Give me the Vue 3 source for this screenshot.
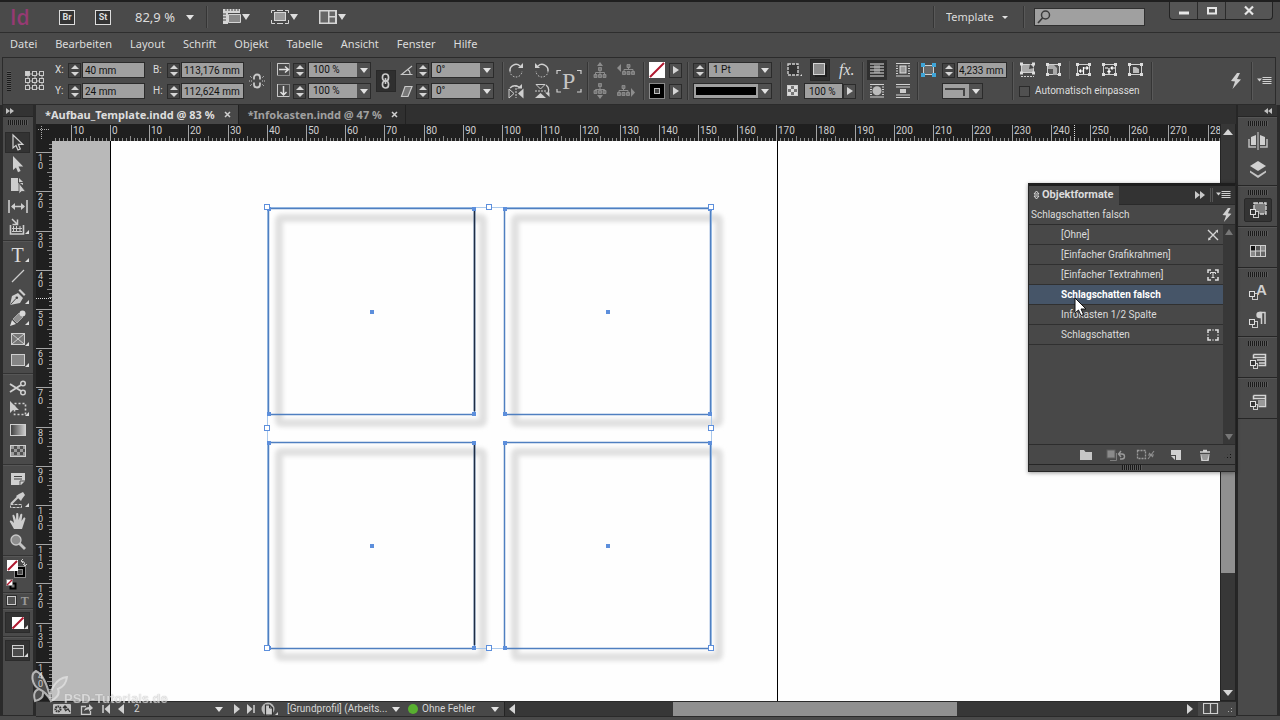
<script setup>
const icons = {
  selection: [20, 20, '<path d="M5 2v13l3-2.600 2 4.600 2.300-1-2-4.600h4.500z" fill="#3a3a3a" stroke="#d2d2d2" stroke-width="1.200"/>'],
  direct: [20, 20, '<path d="M5 2v14l3-2.600 2 4.800 2.600-1.100-2.100-4.700h4.700z" fill="#cfcfcf"/>'],
  page: [20, 20, '<path d="M3 3h7v5h5v2l-4-2.500v8.500H3z" fill="#cdcdcd"/><path d="M11 3l4 4h-4z" fill="#cdcdcd"/><path d="M11 8v11l2.500-2.500h4z" fill="#cdcdcd" stroke="#4a4a4a" stroke-width=".8"/>'],
  gap: [20, 20, '<path d="M1 4v13M19 4v13M4 10.500h12" stroke="#cdcdcd" stroke-width="1.600"/><path d="M3 10.500l4-3.500v7zM17 10.500l-4-3.500v7z" fill="#cdcdcd"/>'],
  collector: [20, 20, '<path d="M2.500 8v9h13V8" stroke="#cdcdcd" stroke-width="1.600" fill="none"/><path d="M5.500 9v6M8.500 9v6M12 9v6M4 11.500h10M4 14.500h10" stroke="#cdcdcd" stroke-width="1" fill="none"/><path d="M4 2l5 5M9.500 2.500v5h-5" stroke="#cdcdcd" stroke-width="1.500" fill="none"/>'],
  line: [20, 20, '<path d="M4 16L16 4" stroke="#cdcdcd" stroke-width="1.300"/>'],
  pen: [20, 20, '<path d="M2 18l2-9 6-3 5 5-3 5z" fill="#cdcdcd"/><path d="M10.500 3.500l5.500 5.500 1.500-1.500-5.500-5.500z" fill="#cdcdcd"/><path d="M2.500 17.500l5.500-6" stroke="#444"/><circle cx="8.800" cy="10.800" r="1.300" fill="#444"/>'],
  pencil: [20, 20, '<path d="M2 18l2-6 4 4z" fill="#ddd"/><path d="M5 11l6-6 4 4-6 6z" fill="#8f8f8f" stroke="#b5b5b5" stroke-width=".8"/><circle cx="14.500" cy="5.500" r="3" fill="#d8d8d8"/>'],
  xframe: [20, 20, '<rect x="3.500" y="4.500" width="13" height="11" fill="#777" stroke="#cfcfcf"/><path d="M4 5l12 10M16 5L4 15" stroke="#cfcfcf"/>'],
  rect: [20, 20, '<rect x="3.500" y="4.500" width="13" height="11" fill="#858585" stroke="#cfcfcf"/>'],
  scissors: [20, 20, '<path d="M2 6l11 7M2 14l11-7" stroke="#cfcfcf" stroke-width="1.900"/><circle cx="15" cy="5.500" r="2.300" fill="none" stroke="#cfcfcf" stroke-width="1.500"/><circle cx="15" cy="14.500" r="2.300" fill="none" stroke="#cfcfcf" stroke-width="1.500"/>'],
  transform: [20, 20, '<rect x="6.500" y="4.500" width="11" height="11" fill="none" stroke="#cfcfcf" stroke-width="1.600" stroke-dasharray="2 2"/><path d="M2 2v12l3-3h6z" fill="#cfcfcf"/>'],
  gradient: [20, 20, '<defs><linearGradient id="gsw"><stop offset="0" stop-color="#3c3c3c"/><stop offset="1" stop-color="#d0d0d0"/></linearGradient></defs><rect x="2.500" y="4.500" width="15" height="11" fill="url(#gsw)" stroke="#cfcfcf"/>'],
  feather: [20, 20, '<rect x="2.500" y="4.500" width="15" height="11" fill="#9a9a9a" stroke="#cfcfcf"/><path d="M3 8h3v3H3zM9 8h3v3H9zM6 5h3v3H6zM12 5h3v3h-3zM15 8h2v3h-2zM6 11h3v3H6zM12 11h3v3h-3z" fill="#505050"/>'],
  note: [20, 20, '<path d="M3 4h14v8l-4 4H3z" fill="#d0d0d0"/><path d="M6 7.500h8M6 10h8" stroke="#444"/><path d="M12 16v-4h5" fill="none" stroke="#555"/>'],
  dropper: [20, 20, '<path d="M3 14l7-7" stroke="#ccc" stroke-width="2.200"/><path d="M8 6l5 5 1-2 3-4-2-3-4 2z" fill="#cfcfcf"/><rect x="2.500" y="14.500" width="11" height="3" fill="none" stroke="#ccc" stroke-dasharray="3 1"/>'],
  hand: [20, 20, '<path d="M6 18l-4-7c-.8-1.500 1-2.200 2-1l2 2-1.500-7c-.2-1.500 1.700-1.800 2-.3L8 9l.2-6c0-1.400 2-1.400 2.100 0l.3 6 1.700-5.400c.4-1.300 2.200-.9 2 .5L13.500 10l2-3c.8-1 2.300-.2 1.800 1L15 15l-1 3z" fill="#cdcdcd"/>'],
  magnify: [20, 20, '<path d="M11 11l6 6" stroke="#c4c4c4" stroke-width="2.800"/><circle cx="8" cy="8" r="5" fill="#8d8d8d" stroke="#c8c8c8" stroke-width="1.300"/>'],
  none: [20, 20, '<rect x="4" y="4" width="12" height="12" fill="#fff"/><path d="M4.500 15.500l11-11" stroke="#b0182f" stroke-width="2"/>'],
  view: [20, 20, '<rect x="4.500" y="4.500" width="11" height="11" fill="#4c4c4c" stroke="#cfcfcf"/><path d="M5 7.500h10" stroke="#cfcfcf"/>'],
  refpoint: [20, 20, '<path d="M3 3h14v14H3zM3 10h14M10 3v14" stroke="#bdbdbd" fill="none"/><g fill="#4a4a4a" stroke="#c9c9c9"><rect x=".5" y=".5" width="4" height="4" fill="#d0d0d0"/><rect x="7.500" y=".5" width="4" height="4"/><rect x="14.500" y=".5" width="4" height="4"/><rect x=".5" y="7.500" width="4" height="4"/><rect x="7.500" y="7.500" width="4" height="4"/><rect x="14.500" y="7.500" width="4" height="4"/><rect x=".5" y="14.500" width="4" height="4"/><rect x="7.500" y="14.500" width="4" height="4"/><rect x="14.500" y="14.500" width="4" height="4"/></g>'],
  unlink: [16, 16, '<path d="M5 6.500V4.500a3 3 0 0 1 6 0v2M5 9.500v2a3 3 0 0 0 6 0v-2" fill="none" stroke="#c9c9c9" stroke-width="1.800"/><path d="M0 8h3M13 8h3M1 3l2 2M15 3l-2 2M1 13l2-2M15 13l-2-2" stroke="#c9c9c9" stroke-dasharray="1 1"/>'],
  chain: [18, 22, '<rect x="5.500" y="4" width="6" height="7" rx="3" fill="none" stroke="#c9c9c9" stroke-width="1.700"/><rect x="5.500" y="11" width="6" height="7" rx="3" fill="none" stroke="#c9c9c9" stroke-width="1.700"/><path d="M8.500 8v6" stroke="#c9c9c9" stroke-width="1.600"/>'],
  scalex: [16, 16, '<rect x="1.500" y="1.500" width="12" height="12" fill="none" stroke="#c9c9c9" stroke-dasharray="1 1"/><path d="M1.500 13V1.500H13" stroke="#c9c9c9" fill="none"/><path d="M3 7.500h9M9 4.500l3.500 3-3.500 3" stroke="#e0e0e0" stroke-width="1.500" fill="none"/>'],
  scaley: [16, 16, '<rect x="1.500" y="1.500" width="12" height="12" fill="none" stroke="#c9c9c9" stroke-dasharray="1 1"/><path d="M1.500 1v12.500H13" stroke="#c9c9c9" fill="none"/><path d="M7.500 3v9M4.500 9l3 3 3-3" stroke="#e0e0e0" stroke-width="1.500" fill="none"/>'],
  angle: [14, 16, '<path d="M12 4L1.500 12.500h11M7.500 7.500q3 1.500 2.500 5" stroke="#c9c9c9" stroke-width="1.200" fill="none"/>'],
  shear: [14, 16, '<path d="M5 3.500h7l-4 10H1.500z" fill="#777" stroke="#c9c9c9" stroke-width="1.200"/>'],
  rotcw: [16, 16, '<path d="M2 9a6 6 0 0 1 10-5" stroke="#cfcfcf" stroke-width="1.500" fill="none"/><path d="M2 9a6 6 0 0 0 12 0" stroke="#cfcfcf" stroke-dasharray="1.500 1.500" fill="none"/><path d="M10 6h5V1z" fill="#cfcfcf"/>'],
  rotccw: [16, 16, '<path d="M14 9A6 6 0 0 0 4 4" stroke="#cfcfcf" stroke-width="1.500" fill="none"/><path d="M14 9a6 6 0 0 1-12 0" stroke="#cfcfcf" stroke-dasharray="1.500 1.500" fill="none"/><path d="M6 6H1V1z" fill="#cfcfcf"/>'],
  fliph: [16, 16, '<path d="M8 2v13" stroke="#cfcfcf" stroke-dasharray="2 1"/><path d="M1 6v9l5-4.500z" fill="none" stroke="#cfcfcf"/><path d="M15.500 5.500v10L10 10.500z" fill="#cfcfcf"/><path d="M2 5q4-4 9-1" stroke="#cfcfcf" fill="none" stroke-width="1.300"/><path d="M9 5.500h5V1z" fill="#cfcfcf"/>'],
  flipv: [16, 16, '<path d="M1 8h11" stroke="#cfcfcf" stroke-dasharray="2 1"/><path d="M2 1.500h9L6.500 6z" fill="none" stroke="#cfcfcf"/><path d="M1 15h11L6.500 10z" fill="#cfcfcf"/><path d="M12 2q4 3 2 8" stroke="#cfcfcf" fill="none" stroke-width="1.300"/><path d="M11 9.500h4.500V14z" fill="#cfcfcf"/>'],
  pframe: [26, 24, '<path d="M1 5V1.500h4M21 1.500h4V5M1 20v3h4M21 23h4V20" fill="none" stroke="#cfcfcf" stroke-width="1.200"/><text x="6" y="20" font-family="Liberation Serif, serif" font-size="24" fill="#c4c4c4">P</text>'],
  treeup: [16, 16, '<path d="M8 0l3 4H5z" fill="#8d8d8d"/><path d="M8 9v2M3.500 13v-2.500h9V13M8 11v2" stroke="#8d8d8d" fill="none"/><path d="M6.500 5.500h3v3h-3zM2 12.500h3v3H2zM6.500 12.500h3v3h-3zM11 12.500h3v3h-3z" fill="#777" stroke="#929292" stroke-width=".8"/>'],
  treedown: [16, 16, '<path d="M8 16l3-4H5z" fill="#8d8d8d"/><path d="M8 3v4M3.500 9V6.500h9V9" stroke="#8d8d8d" fill="none"/><path d="M6.500.5h3v3h-3zM2 7.500h3v3H2zM6.500 7.500h3v3h-3zM11 7.500h3v3h-3z" fill="#777" stroke="#929292" stroke-width=".8"/>'],
  treeleft: [18, 16, '<path d="M4 2v8L0 6z" fill="#8d8d8d"/><path d="M11.500 4v4M7 10V7.500h9V10" stroke="#8d8d8d" fill="none"/><path d="M10 2.500h3v3h-3zM5.500 9.500h3v3h-3zM10 9.500h3v3h-3zM14.500 9.500h3v3h-3z" fill="#777" stroke="#929292" stroke-width=".8"/>'],
  treeright: [18, 16, '<path d="M14 5v9l4-4.500z" fill="#8d8d8d"/><path d="M6.500 4v4M2 10V7.500h9V10" stroke="#8d8d8d" fill="none"/><path d="M5 2.500h3v3H5zM.5 9.500h3v3h-3zM5 9.500h3v3H5zM9.500 9.500h3v3h-3z" fill="#777" stroke="#929292" stroke-width=".8"/>'],
  strokesw: [16, 16, '<rect x=".5" y=".5" width="15" height="15" fill="#000" stroke="#8b8b8b"/><rect x="5.500" y="5.500" width="5" height="5" fill="#444" stroke="#bdbdbd"/>'],
  fillsw: [16, 16, '<rect width="16" height="16" fill="#fff"/><path d="M1 15L15 1" stroke="#b0182f" stroke-width="2"/>'],
  corner: [18, 16, '<rect x="2" y="2" width="10" height="11" fill="#333" stroke="#cfcfcf" stroke-width="1.400" stroke-dasharray="3 1"/><path d="M14 14l2-2v2z" fill="#ddd"/>'],
  shadow: [20, 20, '<rect x="5" y="5" width="12" height="12" fill="#1a1a1a" opacity=".7"/><rect x="3.500" y="3.500" width="11" height="11" fill="#8c8c8c" stroke="#d5d5d5"/>'],
  checker: [14, 14, '<rect x="1.500" y="1.500" width="10" height="10" fill="#777" stroke="#ccc"/><path d="M2 2h3v3H2zM8 2h3v3H8zM5 5h3v3H5zM2 8h3v3H2zM8 8h3v3H8z" fill="#ddd"/>'],
  wrap0: [16, 16, '<path d="M1 2h14M1 5h14M1 8h14M1 11h14M1 14h14" stroke="#e2e2e2" stroke-width="1.200"/><path d="M5 3h6v8H5z" fill="#bbb" opacity=".5"/>'],
  wrap1: [16, 16, '<path d="M1 1.500h14M1 4h2M1 6.500h2M1 9h2M1 11.500h2M13 4h2M13 6.500h2M13 9h2M13 11.500h2M1 14h14" stroke="#d2d2d2" stroke-width="1.200"/><rect x="5" y="4" width="6" height="7" fill="#999" stroke="#ddd"/>'],
  wrap2: [16, 16, '<path d="M1 1.500h14M1 4h2M1 6.500h2M1 9h2M1 11.500h2M13 4h2M13 6.500h2M13 9h2M13 11.500h2M1 14h14" stroke="#d2d2d2" stroke-width="1.200"/><circle cx="8" cy="7.800" r="4.500" fill="#bbb"/>'],
  wrap3: [16, 16, '<path d="M1 1.500h14M1 4h14M1 12h14M1 14.500h14" stroke="#d2d2d2" stroke-width="1.200"/><rect x="5" y="6" width="6" height="4" fill="#ccc"/>'],
  cornerblue: [18, 16, '<rect x="3.500" y="3.500" width="10" height="9" fill="#686868" stroke="#cfcfcf"/><path d="M1 1h4v4H1zM12 1h4v4h-4zM1 11h4v4H1zM12 11h4v4h-4z" fill="#3fa5d8"/>'],
  fit1: [18, 16, '<rect x="2.500" y="2.500" width="12" height="8" fill="#aaa" stroke="#d0d0d0"/><path d="M11 2l4 4-5 1z" fill="#444"/><path d="M1 .5h3v3H1zM13 .5h3v3h-3zM1 9.500h3v3H1zM13 9.500h3v3h-3z" fill="#ddd"/><path d="M2 14.500h13" stroke="#d0d0d0" stroke-dasharray="2 1"/>'],
  fit2: [18, 16, '<rect x="2.500" y="2.500" width="12" height="10" fill="#555" stroke="#d0d0d0"/><path d="M3 3h6l3 3v7H8V7H3z" fill="#aaa"/><path d="M1 1h3v3H1zM13 1h3v3h-3zM1 11h3v3H1zM13 11h3v3h-3z" fill="#ddd"/>'],
  fit3: [18, 16, '<rect x="2.500" y="2.500" width="12" height="10" fill="#444" stroke="#d0d0d0"/><path d="M4.500 9h4M6 7.500L4.500 9 6 10.500M8.500 5v7M9 6h4M11.500 4.500L13 6l-1.500 1.500" stroke="#fff" stroke-width="1.200" fill="none"/><path d="M1 1h3v3H1zM13 1h3v3h-3zM1 11h3v3H1zM13 11h3v3h-3z" fill="#ddd"/>'],
  fit4: [18, 16, '<rect x="2.500" y="2.500" width="12" height="10" fill="#444" stroke="#d0d0d0"/><path d="M8 6v6M6.500 10L8 8.500 9.500 10M4 6h3M10 6h4M11.500 4.500L10 6l1.500 1.500" stroke="#fff" stroke-width="1.200" fill="none"/><path d="M1 1h3v3H1zM13 1h3v3h-3zM1 11h3v3H1zM13 11h3v3h-3z" fill="#ddd"/>'],
  fit5: [18, 16, '<rect x="2.500" y="2.500" width="12" height="10" fill="#444" stroke="#d0d0d0"/><path d="M6 5h3l3 2v4H6z" fill="#bbb"/><path d="M1 1h3v3H1zM13 1h3v3h-3zM1 11h3v3H1zM13 11h3v3h-3z" fill="#ddd"/>'],
  bolt: [12, 18, '<path d="M7 1L1 9l4 .5L2.500 17 11 7.500l-4-.5L10 1z" fill="#d0d0d0"/>'],
  flymenu: [15, 10, '<path d="M0 2.500h5L2.500 5.500z" fill="#d0d0d0"/><path d="M5.500 1.500h9M5.500 3.500h9M5.500 5.500h9M5.500 7.500h9" stroke="#d0d0d0"/>'],
  ruler: [20, 18, '<path d="M1 1h17v4H6v11H1z" fill="#d5d5d5"/><path d="M6.500 6.500h12v8h-12z" fill="#8a8a8a" stroke="#d5d5d5"/><path d="M4 1v2M7 1v2M10 1v2M13 1v2M16 1v2M1 6h3M1 9h3M1 12h3" stroke="#444"/>'],
  screen: [20, 18, '<rect x="4.500" y="4.500" width="11" height="8" fill="#999" stroke="#d5d5d5"/><path d="M1.500 5V2.500H5M15 2.500h3.500V5M1.500 12v3.500H5M15 15.500h3.500V12M7 2.500h6M7 15.500h6" stroke="#d5d5d5" fill="none"/>'],
  arrange: [20, 18, '<rect x="1" y="2" width="18" height="14" fill="#d5d5d5"/><path d="M2.500 3.500H10v11H2.500zM11.500 3.500H17v4.500h-5.500zM11.500 9.500H17v5h-5.500z" fill="#666"/>'],
  pages: [20, 20, '<path d="M10 1v18" stroke="#d0d0d0"/><path d="M8 4v10H3V6zM12 4v10h5V6z" fill="#d0d0d0"/><path d="M1 8v8h7M19 8v8h-7" stroke="#bdbdbd" stroke-width="1.500" fill="none"/>'],
  layers: [20, 20, '<path d="M10 2l8 5-8 5-8-5z" fill="#d0d0d0"/><path d="M2 11.500l8 5 8-5v2L10 19l-8-5.500z" fill="#c4c4c4"/>'],
  objstyle: [20, 20, '<rect x="6" y="3" width="12" height="11" fill="#7d7d7d" stroke="#d5d5d5" stroke-width="1.400" stroke-dasharray="4 1"/><rect x="5.500" y="11.500" width="5" height="6" fill="#333" stroke="#c9c9c9"/><rect x="2.500" y="9.500" width="5" height="5" fill="#333" stroke="#e0e0e0"/>'],
  swatches: [20, 20, '<rect x="2" y="4" width="16" height="12" fill="#cfcfcf"/><path d="M3 5h4v4.500H3z" fill="#111"/><path d="M8 5h4v4.500H8z" fill="#555"/><path d="M13 5h4v4.500h-4zM3 10.500h4V15H3z" fill="#888"/><path d="M8 10.500h4V15H8zM13 10.500h4V15h-4z" fill="#666"/>'],
  charstyle: [20, 20, '<text x="8" y="13" font-family="Liberation Sans, sans-serif" font-weight="bold" font-size="15" fill="#d0d0d0">A</text><rect x="4.500" y="11.500" width="5" height="6" fill="#444" stroke="#c9c9c9"/><rect x="1.500" y="9.500" width="5" height="5" fill="#444" stroke="#e0e0e0"/>'],
  parastyle: [20, 20, '<path d="M17 2v12M13.500 2v12M17.500 2.500h-6" stroke="#d0d0d0" stroke-width="1.500"/><path d="M13.500 1.800h-2a3.200 3.200 0 0 0 0 6.400h2z" fill="#d0d0d0"/><rect x="4.500" y="11.500" width="5" height="6" fill="#444" stroke="#c9c9c9"/><rect x="1.500" y="9.500" width="5" height="5" fill="#444" stroke="#e0e0e0"/>'],
  tablestyle: [20, 20, '<path d="M5.500 3.500h12v11h-7M5.500 3.500v4M6 6.500h12M9 9h9M11 12h7" stroke="#d5d5d5" stroke-width="1.500" fill="none"/><rect x="5.500" y="12.500" width="4" height="5" fill="#444" stroke="#c9c9c9"/><rect x="2.500" y="9.500" width="5" height="5" fill="#333" stroke="#e0e0e0"/>'],
  cellstyle: [20, 20, '<path d="M5.500 3.500h12v11h-7M5.500 3.500v4M6 6.500h12" stroke="#d5d5d5" stroke-width="1.500" fill="none"/><rect x="10" y="8" width="7" height="6" fill="#999"/><rect x="5.500" y="12.500" width="4" height="5" fill="#444" stroke="#c9c9c9"/><rect x="2.500" y="9.500" width="5" height="5" fill="#333" stroke="#e0e0e0"/>'],
  clear: [12, 12, '<path d="M1 1l10 10M9 3L2 10" stroke="#d5d5d5" stroke-width="1.400"/><path d="M8 2l3-1.500V4zM1 11.500l.5-3 2.500 2z" fill="#d5d5d5"/>'],
  tframe: [12, 12, '<path d="M4 1H1v3M8 1h3v3M1 8v3h3M11 8v3H8" fill="none" stroke="#e0e0e0" stroke-width="1.500"/><path d="M3.500 5V3.500h5V5M6 3.500v5M4.500 8.500h3" stroke="#e0e0e0" fill="none"/>'],
  gframe: [12, 12, '<path d="M4 1H1v3M8 1h3v3M1 8v3h3M11 8v3H8M5.500 1h1M5.500 11h1M1 5.500v1M11 5.500v1" fill="none" stroke="#e0e0e0" stroke-width="1.500"/>'],
  folder: [14, 12, '<path d="M1 1h4l1.500 2H13v8H1z" fill="#c6c6c6"/>'],
  clearov: [20, 12, '<rect x="1" y="1" width="8" height="8" fill="#8a8a8a" stroke="#5c5c5c"/><path d="M10.500 4v7.500H4" stroke="#7e7e7e" fill="none"/><path d="M13 5h3a2.500 2.500 0 0 1 0 5h-2M15 2l-2.500 3L15 8" stroke="#9a9a9a" stroke-width="1.400" fill="none"/>'],
  clearnd: [20, 12, '<rect x="1.500" y="1.500" width="8" height="8" fill="none" stroke="#9a9a9a" stroke-width="1.300" stroke-dasharray="2 1"/><path d="M12 10l6-8M12 6h6M13 4l4 4" stroke="#8e8e8e" stroke-width="1.100"/>'],
  newdoc: [12, 12, '<path d="M1 1h10v10H6V6H1z" fill="#d0d0d0"/><path d="M1 7h4v4z" fill="#d0d0d0"/>'],
  trash: [12, 12, '<path d="M4 1.500h4M1 3h10" stroke="#d0d0d0" stroke-width="1.500"/><path d="M2 5l.8 6.500h6.400L10 5M4 5v6M6 5v6M8 5v6" stroke="#d0d0d0" stroke-width="1.200" fill="none"/>'],
  gear: [20, 12, '<rect x="1" y="1" width="18" height="10" rx="1" fill="#c0c0c0"/><circle cx="6" cy="6" r="2.500" fill="none" stroke="#333" stroke-width="2.200" stroke-dasharray="1.500 .7"/><path d="M11 5l2-2 2 2M13 3v4M13 8l3-2 2 3" stroke="#333" stroke-width="1.300" fill="none"/>'],
  share: [14, 12, '<path d="M6 3.500H1.500v8h9V8" stroke="#c9c9c9" stroke-width="1.300" fill="none"/><path d="M4 8q1-4 5-4V1l4 4-4 3.500V6.500Q6 6 4 8z" fill="#c9c9c9"/>'],
  docstate: [18, 14, '<circle cx="7" cy="7" r="6.500" fill="#b9b9b9"/><path d="M4.500 3h4l3 3v7h-7z" fill="#c9c9c9" stroke="#333" stroke-width="1.200"/><path d="M8.500 3v3h3" stroke="#333" fill="none"/><path d="M14 13h3v-3z" fill="#ccc"/>'],
  split: [16, 12, '<path d="M.5.500h14v10H.5zM7.500 1v10" fill="none" stroke="#cfcfcf" stroke-width="1.200"/>'],
  search: [14, 14, '<circle cx="8.500" cy="5" r="4" fill="none" stroke="#3a3a3a" stroke-width="1.500"/><path d="M5.500 8L1 13" stroke="#3a3a3a" stroke-width="1.700"/>'],
  minimize: [14, 10, '<path d="M2 5.500h10v3H2z" fill="#e6e6e6"/>'],
  maximize: [14, 10, '<rect x="3" y="2" width="8" height="5.500" fill="none" stroke="#e6e6e6" stroke-width="2"/>'],
  close: [14, 12, '<path d="M3 1.500l8 8M11 1.500l-8 8" stroke="#e6e6e6" stroke-width="2.200"/>'],
}
const menus = ['Datei', 'Bearbeiten', 'Layout', 'Schrift', 'Objekt', 'Tabelle', 'Ansicht', 'Fenster', 'Hilfe']
const toolSections = [
  [['selection', 'Auswahl', 0], ['direct', 'Direktauswahl', 0], ['page', 'Seite', 0], ['gap', 'Lücke', 0], ['collector', 'Inhaltsaufnahme', 1]],
  [['text', 'Text', 1], ['line', 'Linie', 0], ['pen', 'Zeichenstift', 1], ['pencil', 'Buntstift', 1], ['xframe', 'Rechteckrahmen', 1], ['rect', 'Rechteck', 1]],
  [['scissors', 'Schere', 0], ['transform', 'Frei transformieren', 1], ['gradient', 'Verlaufsfarbfeld', 0], ['feather', 'Weiche Verlaufskante', 0]],
  [['note', 'Notiz', 0], ['dropper', 'Pipette', 1], ['hand', 'Hand', 0], ['magnify', 'Zoom', 0]],
]
const dockGroups = [['pages', 'layers'], ['objstyle'], ['swatches'], ['charstyle', 'parastyle'], ['tablestyle'], ['cellstyle']]
const styles = [
  ['[Ohne]', 'clear'], ['[Einfacher Grafikrahmen]', ''], ['[Einfacher Textrahmen]', 'tframe'],
  ['Schlagschatten falsch', ''], ['Infokasten 1/2 Spalte', ''], ['Schlagschatten', 'gframe'],
]
// distance of 10 mm on screen at the current zoom
const STEP = 39.2
const range = (n) => Array.from({ length: n }, (_, i) => i)
const hMajor = range(30).map((i) => ({ x: Math.round(58 + (i - 1) * STEP), n: Math.abs(i - 1) * 10 }))
const hMinor = range(310).map((i) => ({ x: Math.round(58 + (i - 20) * STEP / 10), mid: i % 5 === 0 }))
const vMajor = range(14).map((i) => ({ y: Math.round(-28 + (i + 1) * STEP), d: String((i + 1) * 10).split('') }))
const vMinor = range(160).map((i) => ({ y: Math.round(-28 + i * STEP / 10), mid: i % 5 === 0 }))
const frames = [[268, 208], [504, 208], [268, 442], [504, 442]]
const handles = [[267, 207], [489, 207], [711, 207], [267, 428], [711, 428], [267, 648], [489, 648], [711, 648]]
</script>

<template>
  <div class="app">
    <header class="titlebar">
      <span class="logo">Id</span>
      <button class="badge">Br</button>
      <button class="badge">St</button>
      <label class="combo zoom"><select aria-label="Zoomfaktor"><option>82,9 %</option></select></label>
      <i class="vsep tall"></i>
      <button v-for="n in ['ruler', 'screen', 'arrange']" :key="n" class="drop" :aria-label="n">
        <svg width="20" height="18" v-html="icons[n][2]"></svg><i class="tri"></i>
      </button>
      <i class="vsep tall push"></i>
      <label class="combo template"><select aria-label="Arbeitsbereich"><option>Template</option></select></label>
      <i class="vsep tall"></i>
      <label class="search"><svg width="14" height="14" v-html="icons.search[2]"></svg><input type="text" aria-label="Suche"></label>
      <div class="winbtns">
        <button v-for="n in ['minimize', 'maximize', 'close']" :key="n" :class="n" :aria-label="n">
          <svg :width="icons[n][0]" :height="icons[n][1]" v-html="icons[n][2]"></svg>
        </button>
      </div>
    </header>

    <nav class="menubar"><button v-for="m in menus" :key="m">{{ m }}</button></nav>

    <section class="control">
      <i class="grip vertical"></i>
      <svg class="ref" width="20" height="20" v-html="icons.refpoint[2]"></svg>
      <div class="grid pos">
        <label for="fx">X:</label><i class="spin"></i><input id="fx" value="40 mm">
        <label for="fy">Y:</label><i class="spin"></i><input id="fy" value="24 mm">
      </div>
      <div class="grid size">
        <label for="fb">B:</label><i class="spin"></i><input id="fb" value="113,176 mm">
        <label for="fh">H:</label><i class="spin"></i><input id="fh" value="112,624 mm">
      </div>
      <svg class="unlink" width="16" height="16" v-html="icons.unlink[2]"></svg>
      <i class="vsep"></i>
      <div class="grid scale">
        <svg width="16" height="16" v-html="icons.scalex[2]"></svg><i class="spin"></i>
        <span class="combo"><select aria-label="X-Skalierung"><option>100 %</option></select></span>
        <svg width="16" height="16" v-html="icons.scaley[2]"></svg><i class="spin"></i>
        <span class="combo"><select aria-label="Y-Skalierung"><option>100 %</option></select></span>
      </div>
      <button class="pressed" aria-label="Proportionen"><svg width="18" height="22" v-html="icons.chain[2]"></svg></button>
      <div class="grid angle">
        <svg width="14" height="16" v-html="icons.angle[2]"></svg><i class="spin"></i>
        <span class="combo"><select aria-label="Drehwinkel"><option>0°</option></select></span>
        <svg width="14" height="16" v-html="icons.shear[2]"></svg><i class="spin"></i>
        <span class="combo"><select aria-label="Scherwinkel"><option>0°</option></select></span>
      </div>
      <i class="vsep"></i>
      <div class="grid rot">
        <svg v-for="n in ['rotcw', 'rotccw', 'fliph', 'flipv']" :key="n" width="16" height="16" v-html="icons[n][2]"></svg>
      </div>
      <svg class="pf" width="26" height="24" v-html="icons.pframe[2]"></svg>
      <i class="vsep"></i>
      <div class="grid tree">
        <svg v-for="n in ['treeup', 'treeleft', 'treedown', 'treeright']" :key="n" width="18" height="16" v-html="icons[n][2]"></svg>
      </div>
      <i class="vsep"></i>
      <div class="grid paint">
        <svg width="16" height="16" v-html="icons.fillsw[2]"></svg><button class="arrow" aria-label="Fläche"></button>
        <svg width="16" height="16" v-html="icons.strokesw[2]"></svg><button class="arrow" aria-label="Kontur"></button>
      </div>
      <i class="vsep"></i>
      <div class="grid weight">
        <i class="spin"></i><span class="combo"><select aria-label="Konturstärke"><option>1 Pt</option></select></span>
        <span class="combo line"><select aria-label="Konturart"><option></option></select><i class="bar"></i></span>
      </div>
      <i class="vsep"></i>
      <div class="stack effects">
        <div class="row">
          <svg width="18" height="16" v-html="icons.corner[2]"></svg>
          <button class="pressed" aria-label="Schlagschatten"><svg width="20" height="20" v-html="icons.shadow[2]"></svg></button>
          <button class="fx">fx.</button>
        </div>
        <div class="row">
          <svg width="14" height="14" v-html="icons.checker[2]"></svg>
          <input class="opacity" aria-label="Deckkraft" value="100 %"><button class="arrow" aria-label="Deckkraft wählen"></button>
        </div>
      </div>
      <i class="vsep"></i>
      <div class="grid wrap">
        <svg v-for="n in ['wrap0', 'wrap1', 'wrap2', 'wrap3']" :key="n" :class="n" width="16" height="16" v-html="icons[n][2]"></svg>
      </div>
      <i class="vsep"></i>
      <div class="stack radius">
        <div class="row"><svg width="18" height="16" v-html="icons.cornerblue[2]"></svg><i class="spin"></i><input aria-label="Eckenradius" value="4,233 mm"></div>
        <div class="row end"><span class="combo shape"><select aria-label="Eckenform"><option></option></select><i class="edge"></i></span></div>
      </div>
      <i class="vsep"></i>
      <div class="stack fit">
        <div class="row">
          <svg v-for="n in ['fit1', 'fit2']" :key="n" width="18" height="16" v-html="icons[n][2]"></svg>
          <i class="minisep"></i>
          <svg v-for="n in ['fit3', 'fit4', 'fit5']" :key="n" width="18" height="16" v-html="icons[n][2]"></svg>
        </div>
        <label class="row check"><input type="checkbox"><span>Automatisch einpassen</span></label>
      </div>
      <i class="vsep"></i>
      <button class="push" aria-label="Schnell anwenden"><svg width="12" height="18" v-html="icons.bolt[2]"></svg></button>
      <i class="vsep last"></i>
      <button aria-label="Bedienfeldmenü"><svg width="15" height="10" v-html="icons.flymenu[2]"></svg></button>
    </section>

    <main class="main">
      <aside class="tools">
        <div class="colhead"><svg width="8" height="6"><path d="M0 0l4 3-4 3zM4 0l4 3-4 3z" fill="#c0c0c0" /></svg></div>
        <i class="grip"></i>
        <div v-for="(sec, s) in toolSections" :key="s" class="toolsec">
          <button v-for="t in sec" :key="t[0]" class="tool" :class="{ active: t[0] === 'selection', more: t[2] }" :aria-label="t[1]">
            <span v-if="t[0] === 'text'" class="serif">T</span>
            <svg v-else width="20" height="20" v-html="icons[t[0]][2]"></svg>
          </button>
        </div>
        <div class="toolsec swatchsec">
          <svg width="24" height="33">
            <rect x="9.500" y="7.500" width="11" height="11" fill="#000" stroke="#8a8a8a" /><rect x="12.500" y="10.500" width="5" height="5" fill="#484848" stroke="#8a8a8a" />
            <rect x="2" y="1" width="11" height="11" fill="#fff" /><path d="M3 11l9-9" stroke="#b0182f" stroke-width="2" />
            <path d="M16 2q4 0 4 4M18 0l-2 2 2 2M18 5l2 2 2-2" stroke="#ccc" fill="none" />
            <rect x="5.500" y="24.500" width="5" height="5" fill="#777" stroke="#000" stroke-width="2" /><rect x="1.500" y="20.500" width="6" height="6" fill="#fff" stroke="#888" /><path d="M2 26l5-5" stroke="#b0182f" stroke-width="1.500" />
          </svg>
        </div>
        <div class="toolsec target"><i class="box"></i><span>T</span></div>
        <div class="toolsec"><button class="tool active more" aria-label="Keine anwenden"><svg width="20" height="20" v-html="icons.none[2]"></svg></button></div>
        <div class="toolsec"><button class="tool active more" aria-label="Bildschirmmodus"><svg width="20" height="20" v-html="icons.view[2]"></svg></button></div>
      </aside>

      <section class="doc">
        <div class="tabs">
          <div class="tab on"><span>*Aufbau_Template.indd @ 83 %</span><button aria-label="Tab schließen"><svg width="7" height="7"><path d="M1 1l5 5M6 1L1 6" stroke="#d0d0d0" stroke-width="1.500" /></svg></button></div>
          <div class="tab"><span>*Infokasten.indd @ 47 %</span><button aria-label="Tab schließen"><svg width="7" height="7"><path d="M1 1l5 5M6 1L1 6" stroke="#d0d0d0" stroke-width="1.500" /></svg></button></div>
        </div>
        <div class="view">
          <svg class="origin" width="100%" height="100%"><path d="M2 5.500h12M5.500 2v14" stroke="#aaa" stroke-dasharray="1 1" /></svg>
          <svg class="hruler" width="100%" height="100%">
            <path v-for="t in hMinor" :key="'m' + t.x" :d="`M${t.x + .5} ${t.mid ? 12 : 14}V17`" stroke="#8c8c8c" />
            <g v-for="t in hMajor" :key="t.x"><path :d="`M${t.x + .5} 1V17`" stroke="#a5a5a5" /><text :x="t.x + 2" y="10">{{ t.n }}</text></g>
            <path d="M1022.500 1v16" stroke="#ddd" stroke-dasharray="1 1" />
          </svg>
          <svg class="vruler" width="100%" height="100%">
            <path v-for="t in vMinor" :key="'m' + t.y" :d="`M${t.mid ? 11 : 13} ${t.y + .5}H16`" stroke="#8c8c8c" />
            <g v-for="t in vMajor" :key="t.y"><path :d="`M0 ${t.y + .5}H16`" stroke="#a5a5a5" /><text v-for="(c, i) in t.d" :key="i" x="2" :y="t.y + 9 + i * 8">{{ c }}</text></g>
            <path d="M0 157.500h16" stroke="#ddd" stroke-dasharray="1 1" />
          </svg>
          <svg class="canvas" width="100%" height="100%">
            <defs><filter id="soft" x="-10%" y="-10%" width="120%" height="120%"><feGaussianBlur stdDeviation="2" /></filter></defs>
            <g transform="translate(-52,-141)">
              <rect x="110" y="130" width="1400" height="900" fill="#fefefe" />
              <path d="M110.500 130v900M777.500 130v900" stroke="#000" />
              <g filter="url(#soft)"><rect v-for="(f, i) in frames" :key="i" :x="f[0] + 11" :y="f[1] + 10" width="204" height="205" rx="2" fill="none" stroke="#e0e0e0" stroke-width="8" /></g>
              <path d="M267 207.500h444M267 648.500h444M267.500 207v441M711.500 207v441" stroke="#a9c8ec" />
              <g v-for="(f, i) in frames" :key="'f' + i">
                <rect :x="f[0] + .5" :y="f[1] + .5" width="206" height="206" fill="none" stroke="#4f7fc0" stroke-width="1.500" />
                <path v-if="i % 2 === 0" :d="`M${f[0] + 206.5} ${f[1] + 3}v200`" stroke="#1e2d44" stroke-width="1.500" />
                <path v-for="(c, j) in [[0, 0], [205, 0], [0, 205], [205, 205], [103, 103]]" :key="j" :d="`M${f[0] + c[0] - 1} ${f[1] + c[1] - 1}h4v4h-4z`" fill="#5d8fdc" />
              </g>
              <rect v-for="(h, i) in handles" :key="'h' + i" :x="h[0] - 2.5" :y="h[1] - 2.5" width="5" height="5" fill="#fff" stroke="#5d8fdc" />
            </g>
          </svg>
          <div class="vscroll"><i class="up"></i><div class="track"><i class="thumb"></i></div><i class="down"></i></div>
        </div>
        <footer class="status">
          <svg class="s1" width="20" height="12" v-html="icons.gear[2]"></svg>
          <svg class="s2" width="14" height="12" v-html="icons.share[2]"></svg>
          <button aria-label="Erste Seite"><svg width="10" height="10"><path d="M1 1v8" stroke="#d0d0d0" stroke-width="1.500" /><path d="M8 0v10L2.500 5z" fill="#d0d0d0" /></svg></button>
          <button class="prev" aria-label="Vorherige Seite"><svg width="6" height="10"><path d="M6 0v10L0 5z" fill="#d0d0d0" /></svg></button>
          <span class="combo pageno"><select aria-label="Seite"><option>2</option></select></span>
          <button aria-label="Nächste Seite"><svg width="6" height="10"><path d="M0 0v10l6-5z" fill="#d0d0d0" /></svg></button>
          <button class="nextlast" aria-label="Letzte Seite"><svg width="10" height="10"><path d="M8 1v8" stroke="#d0d0d0" stroke-width="1.500" /><path d="M1 0v10l5.500-5z" fill="#d0d0d0" /></svg></button>
          <svg class="s3" width="18" height="14" v-html="icons.docstate[2]"></svg>
          <span class="combo profile"><select aria-label="Profil"><option>[Grundprofil] (Arbeits...</option></select></span>
          <i class="dot"></i>
          <span class="combo errors"><select aria-label="Preflight"><option>Ohne Fehler</option></select></span>
          <div class="hscroll"><i class="left"></i><div class="track"><i class="thumb"></i></div><i class="right"></i></div>
          <button class="split" aria-label="Layoutansicht teilen"><svg width="16" height="12" v-html="icons.split[2]"></svg></button>
          <i class="sizer"></i>
        </footer>
      </section>

      <aside class="dock">
        <div class="colhead end-side"><svg width="8" height="6"><path d="M4 0L0 3l4 3zM8 0L4 3l4 3z" fill="#c0c0c0" /></svg></div>
        <div v-for="(g, i) in dockGroups" :key="i" class="dockgroup">
          <i class="grip"></i>
          <button v-for="n in g" :key="n" :class="{ active: n === 'objstyle' }" :aria-label="n"><svg width="20" height="20" v-html="icons[n][2]"></svg></button>
        </div>
      </aside>
    </main>

    <section class="palette">
      <div class="phead">
        <span class="ptab"><svg width="7" height="10"><path d="M1 4l2.500-3L6 4zM1 6l2.500 3L6 6z" fill="none" stroke="#d8d8d8" /></svg>Objektformate</span>
        <svg width="10" height="8"><path d="M0 0l5 4-5 4zM5 0l5 4-5 4z" fill="#c9c9c9" /></svg>
        <i class="psep"></i>
        <svg width="15" height="10" v-html="icons.flymenu[2]"></svg>
      </div>
      <div class="pcur"><span>Schlagschatten falsch</span><svg width="12" height="16" viewBox="0 0 12 18" v-html="icons.bolt[2]"></svg></div>
      <div class="pbody">
        <ul>
          <li v-for="s in styles" :key="s[0]" :class="{ sel: s[0] === 'Schlagschatten falsch' }">
            <span>{{ s[0] }}</span><svg v-if="s[1]" width="12" height="12" v-html="icons[s[1]][2]"></svg>
          </li>
        </ul>
        <div class="pscroll"><i class="up"></i><i class="down"></i></div>
      </div>
      <div class="pfoot">
        <svg v-for="n in ['folder', 'clearov', 'clearnd', 'newdoc', 'trash']" :key="n" :class="n" :width="icons[n][0]" height="12" v-html="icons[n][2]"></svg>
        <i class="sizer dark"></i>
      </div>
      <div class="pgrip"><i class="grip"></i></div>
    </section>

    <div class="watermark">
      <svg width="38" height="34">
        <path d="M20 31C17 17 12 4 5 1-1 4 1 15 8 19q7 3 12 12zM8 19Q1 21 4 31q9-2 8-9M20 31C17 20 26 8 36 7q-1 9-9 12 3 7-7 12z" fill="#ddd" fill-opacity=".25" stroke="#e6e6e6" stroke-width="2" stroke-opacity=".7" />
      </svg>
      <span>PSD-Tutorials.de</span>
    </div>
    <svg class="cursor" width="13" height="20"><path d="M1 1v15l3.500-3 2.500 5.500 2.500-1-2.500-5.500H12z" fill="#fff" stroke="#111" /></svg>
  </div>
</template>

<style>
html, body { margin: 0; background: #4a4a4a; overflow: hidden; }
</style>

<style scoped>
.app { position: relative; display: flex; flex-direction: column; height: 100vh; background: #4a4a4a; color: #dcdcdc; font: 10px/14px Roboto, "Noto Sans", sans-serif; overflow: hidden; border-top: 2px solid #1f1f1f; box-sizing: border-box; }
.app *, .app *::before, .app *::after { box-sizing: border-box; }
i { display: block; font-style: normal; flex: none; }
svg { display: block; flex: none; }
button { background: none; border: 0; padding: 0; margin: 0; color: inherit; font: inherit; display: flex; align-items: center; justify-content: center; flex: none; }
input, select { font: inherit; color: #111; margin: 0; padding: 0 4px; border: 1px solid #2b2b2b; border-radius: 0; background: #a0a0a0; height: 16px; min-width: 0; width: 100%; appearance: none; outline: 0; }
.combo { position: relative; display: flex; }
.combo::after { content: ""; position: absolute; right: 3px; top: 6px; border: 4px solid transparent; border-top: 5px solid #e2e2e2; border-bottom: 0; }
.vsep { width: 1px; height: 38px; background: #353535; box-shadow: 1px 0 0 #595959; }
.vsep.tall { height: 22px; }
.push { margin-left: auto; }

.titlebar { display: flex; align-items: center; height: 31px; border-bottom: 1px solid #2e2e2e; padding-left: 10px; flex: none; }
.logo { width: 49px; color: #963a73; font: 600 21px/28px "Open Sans", sans-serif; }
.badge { width: 16px; height: 15px; border: 1px solid #ddd; background: #333; font-size: 9px; font-weight: 700; margin-right: 20px; }
.zoom { width: 59px; margin: 0 12px 0 4px; }
.zoom select, .template select { background: none; border: 0; color: #dcdcdc; height: 22px; padding: 0; font-family: "Noto Sans", sans-serif; }
.zoom select { font-size: 13px; }
.zoom::after, .template::after { top: 9px; right: 0; }
.drop { width: 48px; justify-content: flex-start; }
.zoom + .vsep { margin-right: 15px; }
.tri { border: 4px solid transparent; border-top: 6px solid #ddd; border-bottom: 0; }
.template { width: 62px; margin: 0 15px 0 12px; }
.template select { font-size: 11px; }
.template::after { border-width: 3px; border-bottom: 0; top: 10px; }
.search { display: flex; align-items: center; width: 111px; height: 18px; margin-left: 10px; background: #a0a0a0; border: 1px solid #303030; padding-left: 2px; }
.search input { border: 0; height: 14px; }
.winbtns { display: flex; align-self: flex-start; height: 18px; margin: 0 7px 0 24px; border: 1px solid #232323; border-top: 0; border-radius: 0 0 4px 4px; background: #555; }
.winbtns button { width: 28px; border-right: 1px solid #2b2b2b; }
.winbtns .close { width: 46px; border: 0; }

.menubar { display: flex; gap: 18px; height: 24px; padding: 0 10px 2px; align-items: center; font: 11px/16px "Noto Sans", sans-serif; flex: none; }

.control { display: flex; align-items: center; height: 48px; border: 1px solid #2b2b2b; margin: 0 4px 0 2px; padding: 0 3px 1px 4px; flex: none; }
.grip { width: 20px; height: 5px; background: repeating-linear-gradient(90deg, #1a1a1a 0 1px, #5a5a5a 1px 2px); margin: 0 auto; }
.grip.vertical { width: 4px; height: 20px; margin: 0 14px 0 0; background: repeating-linear-gradient(0deg, #1a1a1a 0 1px, #5a5a5a 1px 2px); }
.ref { margin-right: 10px; }
.grid { display: grid; grid-auto-rows: 16px; row-gap: 5px; align-items: center; }
.pos { grid-template-columns: 13px 14px 63px; margin-right: 8px; }
.size { grid-template-columns: 14px 14px 63px; margin-right: 5px; }
.pos input, .size input { padding: 0 2px; }
.spin { position: relative; width: 13px; height: 15px; background: #444; border: 1px solid #2b2b2b; }
.spin::before, .spin::after { content: ""; position: absolute; left: 2px; border: 4px solid transparent; }
.spin::before { top: 1px; border-top: 0; border-bottom-color: #d5d5d5; }
.spin::after { bottom: 1px; border-bottom: 0; border-top-color: #d5d5d5; }
.grid .combo select, .combo.shape select { border-right: 14px solid #505050; outline: 1px solid #2b2b2b; outline-offset: -1px; }
.unlink { margin-right: 5px; }
.scale { grid-template-columns: 17px 15px 63px; margin: 0 5px; }
.pressed { background: #2f2f2f; border: 1px solid #292929; width: 20px; height: 22px; }
.angle { grid-template-columns: 16px 15px 63px; margin: 0 8px 0 4px; }
.rot { grid-template-columns: 26px 26px; margin-left: 5px; }
.pf { margin: 0 5px 0 -4px; }
.tree { grid-template-columns: 25px 26px; margin-left: 4px; }
.paint { grid-template-columns: 20px 12px; margin: 0 6px 0 5px; }
.arrow { width: 13px; height: 15px; border: 1px solid #2b2b2b; background: #505050; }
.arrow::before { content: ""; border: 4px solid transparent; border-left: 6px solid #d5d5d5; border-right: 0; }
.weight { grid-template-columns: 15px 64px; margin: 0 8px 0 5px; }
.line { grid-column: 1 / 3; }
.bar { position: absolute; left: 3px; right: 16px; top: 4px; height: 8px; background: #000; }
.stack { display: flex; flex-direction: column; gap: 5px; }
.row { display: flex; align-items: center; height: 16px; }
.effects { width: 71px; margin: 0 5px; }
.effects .row:first-child { gap: 6px; }
.fx { font: italic 16px/16px "Liberation Serif", serif; margin-left: 3px; }
.opacity { width: 39px; margin: 0 0 0 4px; }
.wrap { grid-template-columns: 26px 22px; margin-left: 6px; }
.wrap0 { background: #2f2f2f; outline: 2px solid #2f2f2f; }
.radius { width: 87px; margin: 0 5px 0 2px; }
.radius .row > svg { margin-right: 4px; }
.radius .row > input { margin-left: 2px; padding: 0 1px; }
.end { padding-left: 22px; }
.shape { width: 41px; }
.edge { position: absolute; left: 3px; top: 5px; width: 20px; height: 8px; border: 2px solid #444; border-left: 0; border-bottom: 0; }
.fit { width: 126px; margin: 0 6px; }
.fit .row:first-child { gap: 8px; }
.minisep { width: 1px; height: 18px; background: #5c5c5c; margin: 0 -3px 0 -2px; }
.check input { width: 11px; height: 11px; padding: 0; background: #505050; flex: none; margin-right: 5px; }
.check span { white-space: nowrap; }
.last { margin: 0 5px 0 9px; }

.main { display: flex; flex: 1; min-height: 0; }
.tools { width: 36px; flex: none; border-left: 3px solid #2a2a2a; border-right: 3px solid #2a2a2a; margin-bottom: 4px; border-bottom: 1px solid #2a2a2a; }
.colhead { height: 12px; background: #333; border-bottom: 1px solid #252525; display: flex; align-items: center; padding-left: 3px; margin-bottom: 3px; }
.colhead.end-side { justify-content: flex-end; padding: 0 5px 0 0; margin: 0; }
.tools > .grip { margin-bottom: 7px; }
.toolsec { padding: 0 2px; }
.toolsec + .toolsec { border-top: 1px solid #333; box-shadow: inset 0 1px 0 #565656; margin-top: 3px; padding-top: 3px; }
.tool { position: relative; width: 25px; height: 21px; }
.tool.active { background: #333; border: 1px solid #2b2b2b; }
.more::after { content: ""; position: absolute; right: 1px; bottom: 3px; border: 2px solid transparent; border-right-color: #ddd; border-bottom-color: #ddd; }
.serif { font: 20px/20px "Liberation Serif", serif; }
.swatchsec { height: 37px; }
.target { display: flex; align-items: center; justify-content: space-around; height: 13px; color: #999; font: bold 12px/10px "Liberation Serif", serif; }
.toolsec.target { margin-top: 0; }
.box { width: 9px; height: 9px; border: 1px solid #ccc; background: #555; outline: 1px solid #2e2e2e; }

.doc { flex: 1; min-width: 0; display: flex; flex-direction: column; }
.tabs { display: flex; height: 19px; background: #303030; flex: none; }
.tab { display: flex; align-items: center; padding: 0 7px 0 9px; border-right: 1px solid #222; color: #a0a0a0; font: 700 11px/16px "Noto Sans", sans-serif; }
.tab.on { background: #484848; color: #dedede; }
.tab button { margin-left: 9px; }
.view { flex: 1; min-height: 0; display: grid; grid-template: 17px minmax(0, 1fr) / 16px minmax(0, 1fr) 16px; background: #1f1f1f; }
.hruler, .vruler { fill: #cfcfcf; overflow: hidden; }
.hruler { grid-area: 1 / 2; font-size: 10px; }
.vruler { grid-area: 2 / 1; font-size: 9px; }
.origin { grid-area: 1 / 1; }
.canvas { grid-area: 2 / 2; background: #b9b9b9; }
.vscroll { grid-area: 1 / 3 / 3 / 4; display: flex; flex-direction: column; background: #373737; border: 1px solid #242424; border-top: 0; padding: 5px 0 4px; align-items: center; }
.track { flex: 1; position: relative; align-self: stretch; }
.thumb { position: absolute; background: #909090; }
.vscroll .thumb { left: 0; right: 0; top: 44%; height: 35%; }
.up { border: 5px solid transparent; border-bottom: 6px solid #d5d5d5; border-top: 0; }
.down { border: 5px solid transparent; border-top: 6px solid #d5d5d5; border-bottom: 0; }
.left { border: 5px solid transparent; border-right: 6px solid #d5d5d5; border-left: 0; margin: 0 6px 0 4px; }
.right { border: 5px solid transparent; border-left: 6px solid #d5d5d5; border-right: 0; margin: 0 5px; }
.status { display: flex; align-items: center; height: 16px; flex: none; background: #484848; border-top: 1px solid #2a2a2a; border-bottom: 1px solid #2a2a2a; margin-bottom: 3px; }
.s1 { margin: 0 8px 0 16px; }
.s2 { margin-right: 8px; }
.prev { margin-left: 6px; }
.status select { background: none; border: 0; color: #d5d5d5; height: 14px; line-height: 14px; }
.status .combo::after { top: 5px; }
.pageno { width: 96px; margin: 0 8px 0 6px; }
.nextlast { margin-left: 6px; }
.s3 { margin-left: 5px; }
.profile { width: 122px; margin-left: 2px; }
.profile select { padding-left: 6px; }
.dot { width: 10px; height: 10px; border-radius: 50%; background: #58b030; margin-left: 5px; }
.errors { width: 84px; }
.hscroll { display: flex; flex: 1; align-items: center; height: 100%; background: #373737; margin-left: 2px; border-left: 1px solid #242424; }
.hscroll .thumb { top: 0; bottom: 0; left: 23%; width: 43%; }
.split { margin: 0 5px; }
.sizer { width: 10px; height: 10px; margin-right: 2px; background: radial-gradient(circle, #aaa 0 1px, transparent 1px) 0 0 / 3px 3px; clip-path: polygon(100% 0, 100% 100%, 0 100%); }
.sizer.dark { background: radial-gradient(circle, #111 0 1px, transparent 1px) 0 0 / 3px 3px; }

.dock { width: 44px; flex: none; border-left: 2px solid #262626; border-right: 3px solid #2a2a2a; margin-bottom: 4px; border-bottom: 1px solid #2a2a2a; }
.dockgroup { display: flex; flex-direction: column; align-items: center; padding: 3px 0 4px; border-bottom: 1px solid #262626; border-top: 1px solid #555; }
.dockgroup button { width: 28px; height: 24px; margin-top: 3px; }
.dockgroup button + button { margin-top: 4px; }
.dockgroup button.active { background: #343434; border: 1px solid #292929; border-radius: 2px; }

.palette { position: absolute; left: calc(100% - 252px); top: 181px; width: 208px; background: #484848; border: 1px solid #262626; border-top: 3px solid #1e1e1e; box-shadow: 0 1px 4px rgba(0, 0, 0, .4); }
.phead { display: flex; align-items: center; height: 19px; background: #333; border-bottom: 1px solid #2a2a2a; padding-right: 4px; }
.ptab { display: flex; align-items: center; gap: 2px; height: 19px; width: 90px; padding-left: 4px; background: #484848; font-weight: 700; font-size: 11px; margin-right: auto; }
.psep { width: 3px; height: 14px; border: 1px solid #555; border-width: 0 1px; margin: 0 3px 0 5px; }
.pcur { display: flex; align-items: center; justify-content: space-between; height: 20px; padding: 0 2px; border-bottom: 1px solid #2d2d2d; }
.pbody { display: flex; height: 220px; border-bottom: 1px solid #2d2d2d; }
ul { list-style: none; margin: 0; padding: 0; flex: 1; }
li { display: flex; align-items: center; justify-content: space-between; height: 20px; padding: 0 4px 0 32px; border-bottom: 1px solid #303030; }
li.sel { background: #465568; color: #fff; font-weight: 700; }
.pscroll { width: 12px; background: #383838; display: flex; flex-direction: column; justify-content: space-between; align-items: center; padding: 4px 0; }
.pscroll .up, .pscroll .down { border-left-width: 4px; border-right-width: 4px; }
.pscroll .up { border-bottom-color: #777; }
.pscroll .down { border-top-color: #777; }
.pfoot { display: flex; align-items: center; height: 19px; padding-left: 50px; }
.clearov { margin-left: 13px; }
.clearnd { margin-left: 10px; }
.newdoc { margin-left: 14px; }
.trash { margin-left: 17px; }
.pfoot .sizer { margin-left: auto; }
.pgrip { border-top: 1px solid #262626; height: 7px; }

.watermark { position: absolute; left: 31px; bottom: 16px; display: flex; align-items: flex-end; color: #e6e6e6; }
.watermark span { font: bold 13px/16px "Liberation Sans", sans-serif; opacity: .7; margin: 0 0 -3px -5px; text-shadow: 0 0 1px #888; }
.cursor { position: absolute; left: calc(100% - 206px); top: 295px; }
</style>
